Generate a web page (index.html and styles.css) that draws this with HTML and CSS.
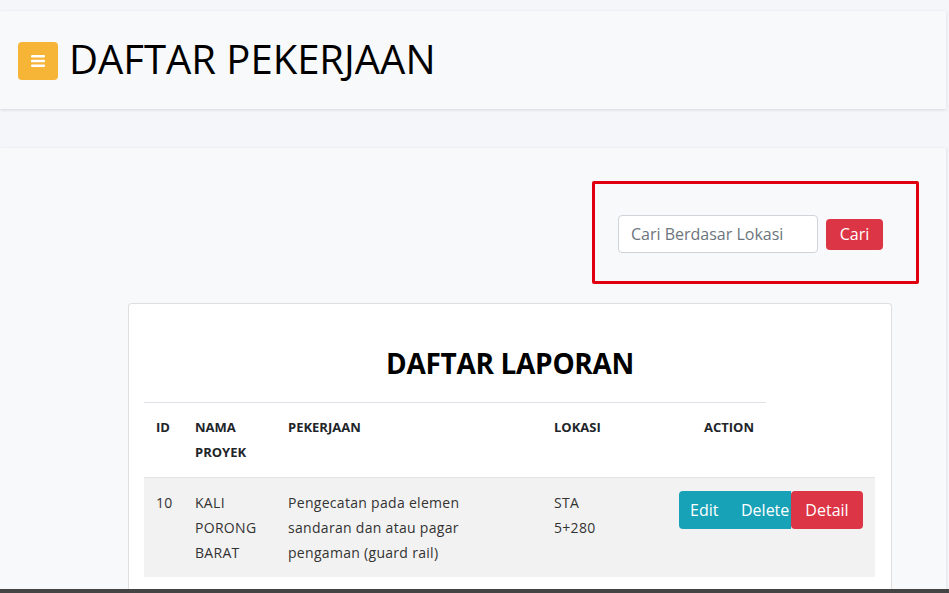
FILE: index.html
```html
<!DOCTYPE html>
<html lang="id">
<head>
  <meta charset="UTF-8" />
  <meta name="viewport" content="width=device-width, initial-scale=1.0"/>
  <title>Daftar Pekerjaan</title>
  <link rel="stylesheet" href="styles.css">
</head>
<body>
  <header class="topbar">
    <button class="menu-btn" type="button" aria-label="Menu">
      <svg width="14" height="12" viewBox="0 0 14 12">
        <rect x="0" y="0" width="14" height="2.4" rx="1" fill="#fff"/>
        <rect x="0" y="4.8" width="14" height="2.4" rx="1" fill="#fff"/>
        <rect x="0" y="9.6" width="14" height="2.4" rx="1" fill="#fff"/>
      </svg>
    </button>
    <h1 class="page-title">DAFTAR PEKERJAAN</h1>
  </header>

  <main class="content">
    <div class="search-row">
      <form class="search-box">
        <input type="text" class="search-input" placeholder="Cari Berdasar Lokasi">
        <button type="button" class="btn btn-red btn-sm">Cari</button>
      </form>
    </div>

    <div class="card">
      <div class="card-body">
        <h2 class="card-title">DAFTAR LAPORAN</h2>

        <table class="report">
          <colgroup>
            <col class="c-id">
            <col class="c-nama">
            <col class="c-pek">
            <col class="c-lok">
            <col class="c-act">
            <col class="c-rest">
          </colgroup>
          <thead>
            <tr>
              <th>ID</th>
              <th>NAMA PROYEK</th>
              <th>PEKERJAAN</th>
              <th>LOKASI</th>
              <th class="right">ACTION</th>
              <th class="blank"></th>
            </tr>
          </thead>
          <tbody>
            <!-- one row per laporan -->
            <tr>
              <td>10</td>
              <td>KALI PORONG BARAT</td>
              <td><div class="wrap">Pengecatan pada elemen sandaran dan atau pagar pengaman (guard rail)</div></td>
              <td>STA 5+280</td>
              <td class="right" colspan="2">
                <div class="actions">
                  <a href="#" class="btn btn-teal btn-edit">Edit</a>
                  <a href="#" class="btn btn-teal btn-clip">Delete</a>
                  <a href="#" class="btn btn-red btn-detail">Detail</a>
                </div>
              </td>
            </tr>
          </tbody>
        </table>
      </div>
    </div>
  </main>

  <div class="bottom-bar"></div>
</body>
</html>
```

FILE: styles.css
```css
body {
  margin: 0;
  background-color: #f4f6f9;
  font-family: "Open Sans", "Liberation Sans", sans-serif;
  color: #212529;
}
.topbar {
  margin-top: 11px;
  margin-right: 3px;
  height: 98px;
  background-color: #f8f9fa;
  box-shadow: 0 1px 3px rgba(0, 0, 0, 0.12);
  display: flex;
  align-items: center;
  padding-left: 18px;
  gap: 11px;
}
.menu-btn {
  width: 40px;
  height: 38px;
  border: none;
  border-radius: 4px;
  background-color: #f7b538;
  display: flex;
  align-items: center;
  justify-content: center;
  padding: 0;
  margin-top: 2px;
}
.page-title {
  margin: 0 0 4px;
  font-size: 40px;
  font-weight: 400;
  color: #000;
}
.content {
  margin-top: 39px;
  margin-right: 3px;
  background-color: #f8f9fa;
  box-shadow: 1px 0 2px rgba(0, 0, 0, 0.08);
  padding-top: 33px;
  min-height: 500px;
}
.search-row {
  display: flex;
  justify-content: flex-end;
  padding-right: 27px;
}
.search-box {
  display: flex;
  align-items: center;
  gap: 8px;
  border: 3px solid #e1000f;
  border-radius: 2px;
  padding: 31px 33px 28px 23px;
  margin: 0;
}
.search-input {
  width: 200px;
  height: 38px;
  box-sizing: border-box;
  border: 1px solid #ced4da;
  border-radius: 4px;
  padding: 0 12px;
  font-family: inherit;
  font-size: 16px;
  color: #495057;
  background-color: #fff;
}
.search-input::placeholder {
  color: #6c757d;
}
.btn {
  display: inline-block;
  box-sizing: border-box;
  font-family: inherit;
  font-size: 16px;
  line-height: 24px;
  color: #fff;
  text-decoration: none;
  border: none;
  border-radius: 4px;
  padding: 7px 12px;
  cursor: pointer;
}
.btn-sm {
  width: 57px;
  height: 31px;
  padding: 3px 0;
  text-align: center;
}
.btn-red {
  background-color: #dc3545;
}
.btn-teal {
  background-color: #17a2b8;
}
.card {
  margin: 19px 0 0 128px;
  width: 762px;
  background-color: #fff;
  border: 1px solid rgba(0, 0, 0, 0.125);
  border-radius: 4px;
}
.card-body {
  padding: 40px 15px 40px;
}
.card-title {
  margin: 0 0 20px;
  text-align: center;
  font-size: 28px;
  font-weight: 700;
  line-height: 38px;
  letter-spacing: -0.3px;
  color: #000;
}
.report {
  width: 731px;
  border-collapse: collapse;
  table-layout: fixed;
  font-size: 14px;
  line-height: 25px;
}
.c-id { width: 39px; }
.c-nama { width: 93px; }
.c-pek { width: 266px; }
.c-lok { width: 78px; }
.c-act { width: 146px; }
.c-rest { width: 109px; }
.report th,
.report td {
  padding: 12px;
  text-align: left;
  vertical-align: top;
}
.report th {
  font-size: 13px;
  font-weight: 700;
  color: #212529;
  border-top: 1px solid #dee2e6;
}
.report th.blank {
  border-top: none;
}
.report td {
  border-top: 1px solid #e3e3e3;
  background-color: #f2f2f2;
  color: #333;
  letter-spacing: 0.3px;
}
.report .right {
  text-align: right;
}
.wrap {
  max-width: 190px;
}
.actions {
  display: inline-flex;
  margin-top: 1px;
  letter-spacing: 0;
}
.actions .btn {
  height: 38px;
}
.btn-edit {
  width: 50px;
  padding: 7px 0 7px 11px;
  text-align: left;
  border-radius: 4px 0 0 4px;
}
.btn-clip {
  width: 62px;
  padding: 7px 0 7px 12px;
  text-align: left;
  border-radius: 0;
  overflow: hidden;
  white-space: nowrap;
}
.btn-detail {
  width: 72px;
  padding: 7px 0;
  text-align: center;
}
.bottom-bar {
  position: fixed;
  left: 0;
  right: 0;
  bottom: 0;
  height: 4px;
  background-color: #444;
}
```
